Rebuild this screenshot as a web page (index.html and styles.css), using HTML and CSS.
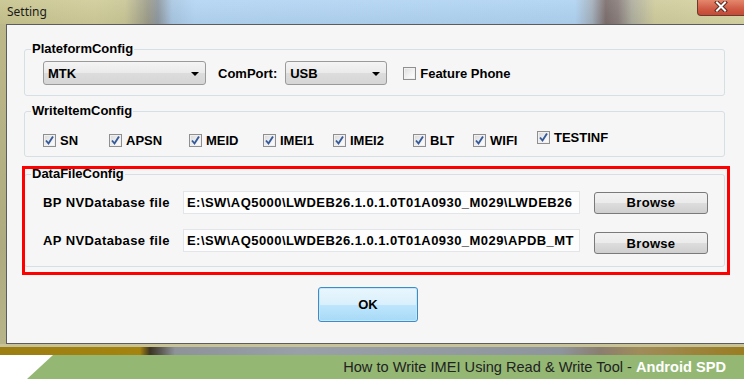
FILE: index.html
```html
<!DOCTYPE html>
<html lang="en">
<head>
    <meta charset="UTF-8">
    <meta name="viewport" content="width=device-width, initial-scale=1.0">
    <title>Setting</title>
    <link rel="stylesheet" href="styles.css">
</head>
<body>

<div class="titlebar">
    <span class="title">Setting</span>
    <span class="close-btn">
        <svg width="14" height="11" viewBox="0 0 14 11">
            <path d="M3 1.5 L11 9.5 M11 1.5 L3 9.5" stroke="#5a2a22" stroke-width="4" stroke-linecap="square"/>
            <path d="M3 1.5 L11 9.5 M11 1.5 L3 9.5" stroke="#ffffff" stroke-width="2" stroke-linecap="square"/>
        </svg>
    </span>
</div>

<div class="frame">
    <div class="dialog">

        <fieldset class="group group-platform">
            <legend>PlateformConfig</legend>
            <div class="row">
                <div class="combo combo-chip"><span>MTK</span><span class="arrow"></span></div>
                <span class="field-label">ComPort:</span>
                <div class="combo combo-port"><span>USB</span><span class="arrow"></span></div>
                <label class="check check-feature"><span class="box"></span>Feature Phone</label>
            </div>
        </fieldset>

        <fieldset class="group group-items">
            <legend>WriteItemConfig</legend>
            <div class="items">
                <label class="check"><span class="box checked"></span>SN</label>
                <label class="check"><span class="box checked"></span>APSN</label>
                <label class="check"><span class="box checked"></span>MEID</label>
                <label class="check"><span class="box checked"></span>IMEI1</label>
                <label class="check"><span class="box checked"></span>IMEI2</label>
                <label class="check"><span class="box checked"></span>BLT</label>
                <label class="check"><span class="box checked"></span>WIFI</label>
                <label class="check raised"><span class="box checked"></span>TESTINF</label>
            </div>
        </fieldset>

        <div class="highlight">
            <fieldset class="group group-files">
                <legend>DataFileConfig</legend>
                <div class="file-row">
                    <span class="file-label">BP NVDatabase file</span>
                    <div class="path">E:\SW\AQ5000\LWDEB26.1.0.1.0T01A0930_M029\LWDEB26</div>
                    <button type="button" class="btn">Browse</button>
                </div>
                <div class="file-row">
                    <span class="file-label">AP NVDatabase file</span>
                    <div class="path">E:\SW\AQ5000\LWDEB26.1.0.1.0T01A0930_M029\APDB_MT</div>
                    <button type="button" class="btn btn-low">Browse</button>
                </div>
            </fieldset>
        </div>

        <button type="button" class="btn-ok">OK</button>
    </div>
</div>

<div class="frame-bottom"></div>

<div class="caption">How to Write IMEI Using Read &amp; Write Tool - <b>Android SPD</b></div>

</body>
</html>
```

FILE: styles.css
```css
body {
    margin: 0;
    width: 744px;
    height: 382px;
    overflow: hidden;
    background: #ffffff;
    font-family: "Liberation Sans", Arial, sans-serif;
}

/* window title bar, over the blurred wallpaper */
.titlebar {
    height: 24px;
    display: flex;
    justify-content: space-between;
    align-items: flex-start;
    background:
        linear-gradient(to bottom, rgba(255, 255, 255, 0.08), rgba(0, 0, 0, 0.04)),
        linear-gradient(to right, #c8c48f 0, #d0cc99 95px, #c9c696 125px, #9c9c8a 148px, #8e98a0 158px, #a9c7e2 172px, #b3d5f3 195px, #b0d3f2 575px, #a3b0bc 592px, #7c6e6c 606px, #8a7e7c 618px, #aeae9e 632px, #cfcc9d 655px, #d7d4a4 744px);
}

.title {
    font-family: "Noto Sans", "Open Sans", sans-serif;
    font-size: 12px;
    color: #1a1a1a;
    padding: 3px 0 0 7px;
}

.close-btn {
    width: 46px;
    height: 14px;
    margin-right: -1px;
    display: flex;
    justify-content: center;
    align-items: flex-start;
    padding-top: 1px;
    border: 1px solid #6b3a2e;
    border-top: none;
    border-radius: 0 0 0 4px;
    background: linear-gradient(to bottom, #e4876c, #cf5a44 60%, #c34a36);
}

.frame {
    padding-left: 6px;
    background: linear-gradient(to bottom, #bdb88a, #b4b184 40%, #aeab80 70%, #b8b48a);
}

.dialog {
    height: 320px;
    box-sizing: border-box;
    border-top: 1px solid #5c5c5c;
    border-left: 1px solid #5c5c5c;
    border-bottom: 1px solid #5c5c5c;
    background: #f6f6f6;
    padding-top: 16px;
}

.frame-bottom {
    height: 11px;
    background:
        linear-gradient(to bottom, #c8c396 0, #c8c396 3px, rgba(0, 0, 0, 0) 3px),
        linear-gradient(to right, #9d7e12 0, #a4830f 140px, #3c3424 150px, #5a5650 160px, #8e939a 175px, #9aa0a8 300px, #8f959d 560px, #8a7e70 600px, #a08c5a 640px, #9a7c22 744px);
}

.caption {
    height: 24px;
    background: #94b874;
    clip-path: polygon(53px 0, 100% 0, 100% 100%, 27px 100%);
    text-align: right;
    padding-right: 18px;
    font-size: 14.6px;
    line-height: 24px;
    color: #222222;
}

.caption b {
    color: #ffffff;
}

/* group boxes */
.group {
    margin: 0 0 0 17px;
    width: 701px;
    box-sizing: border-box;
    border: 1px solid #d6dfe5;
    border-radius: 3px;
    font-size: 13px;
    font-weight: bold;
    color: #000000;
}

.group legend {
    padding: 0 1px;
    margin-left: -12px;
    line-height: 16px;
    font-size: 13px;
    font-weight: bold;
}

.group-platform {
    padding: 4px 0 10px 18px;
}

.group-items {
    margin-top: 7px;
    padding: 10px 0 11px 18px;
}

.group-files {
    padding: 9px 0 14px 18px;
}

.highlight {
    position: relative;
    margin-top: 9px;
}

/* red annotation drawn over the data file group */
.highlight::after {
    content: '';
    position: absolute;
    left: 15px;
    top: 0;
    width: 708px;
    height: 109px;
    border: 3px solid #ff0000;
    box-sizing: border-box;
}

.row {
    display: flex;
    align-items: center;
    height: 24px;
}

.combo {
    height: 24px;
    box-sizing: border-box;
    border: 1px solid #9a9a9a;
    border-radius: 3px;
    background: linear-gradient(to bottom, #f4f4f4, #eaeaea 50%, #dcdcdc 51%, #d6d6d6);
    display: flex;
    align-items: center;
    justify-content: space-between;
    padding: 0 6px 0 4px;
}

.combo-chip {
    width: 163px;
}

.combo-port {
    width: 102px;
    margin-left: 8px;
}

.arrow {
    width: 0;
    height: 0;
    border-left: 4px solid transparent;
    border-right: 4px solid transparent;
    border-top: 4px solid #000000;
    margin-top: 2px;
}

.field-label {
    margin-left: 12px;
}

.check {
    display: flex;
    align-items: center;
    gap: 4px;
    height: 16px;
}

.check-feature {
    margin-left: 16px;
}

.box {
    width: 13px;
    height: 13px;
    box-sizing: border-box;
    border: 1px solid #8f8f8f;
    background: linear-gradient(135deg, #dcdcdc, #f4f4f4 60%, #ffffff);
    box-shadow: inset 0 0 0 1px #f0f0f0;
}

.box.checked {
    background:
        url("data:image/svg+xml,%3Csvg xmlns='http://www.w3.org/2000/svg' width='11' height='11'%3E%3Cpath d='M2 5.5 L4.5 8.5 L9 1.5' fill='none' stroke='%23355a9a' stroke-width='1.9'/%3E%3C/svg%3E") center / 11px 11px no-repeat,
        linear-gradient(135deg, #d8d8d8, #f2f2f2 60%, #ffffff);
}

.items {
    display: grid;
    grid-template-columns: 66px 80px 74px 70px 80px 60px 64px auto;
    align-items: center;
    height: 16px;
}

.raised {
    margin-bottom: 6px;
}

.file-row {
    display: flex;
    align-items: center;
    height: 23px;
}

.file-row + .file-row {
    margin-top: 15px;
}

.file-label {
    width: 140px;
    letter-spacing: 0.4px;
}

.path {
    width: 397px;
    height: 23px;
    box-sizing: border-box;
    border: 1px solid #e2e6e8;
    background: #fdfdfd;
    padding: 0 0 0 3px;
    line-height: 21px;
    letter-spacing: 0.45px;
    white-space: nowrap;
    overflow: hidden;
}

.btn {
    margin-left: 14px;
    width: 114px;
    height: 22px;
    border: 1px solid #7a7a7a;
    border-radius: 3px;
    background: linear-gradient(to bottom, #f2f2f2, #ebebeb 50%, #dddddd 51%, #cfcfcf);
    font-family: "Liberation Sans", Arial, sans-serif;
    font-size: 13px;
    font-weight: bold;
    letter-spacing: 0.3px;
    color: #000000;
    padding: 0;
}

.btn-low {
    margin-top: 5px;
}

.btn-ok {
    display: block;
    margin: 20px 0 0 311px;
    width: 100px;
    height: 35px;
    border: 1px solid #3c8cc8;
    border-radius: 3px;
    background: linear-gradient(to bottom, #eaf6fd, #d9f0fc 50%, #bee6fd 51%, #a7d9f5);
    box-shadow: inset 0 0 0 1px #c8e8fa;
    font-family: "Liberation Sans", Arial, sans-serif;
    font-size: 13px;
    font-weight: bold;
    color: #000000;
    padding: 0;
}
```
